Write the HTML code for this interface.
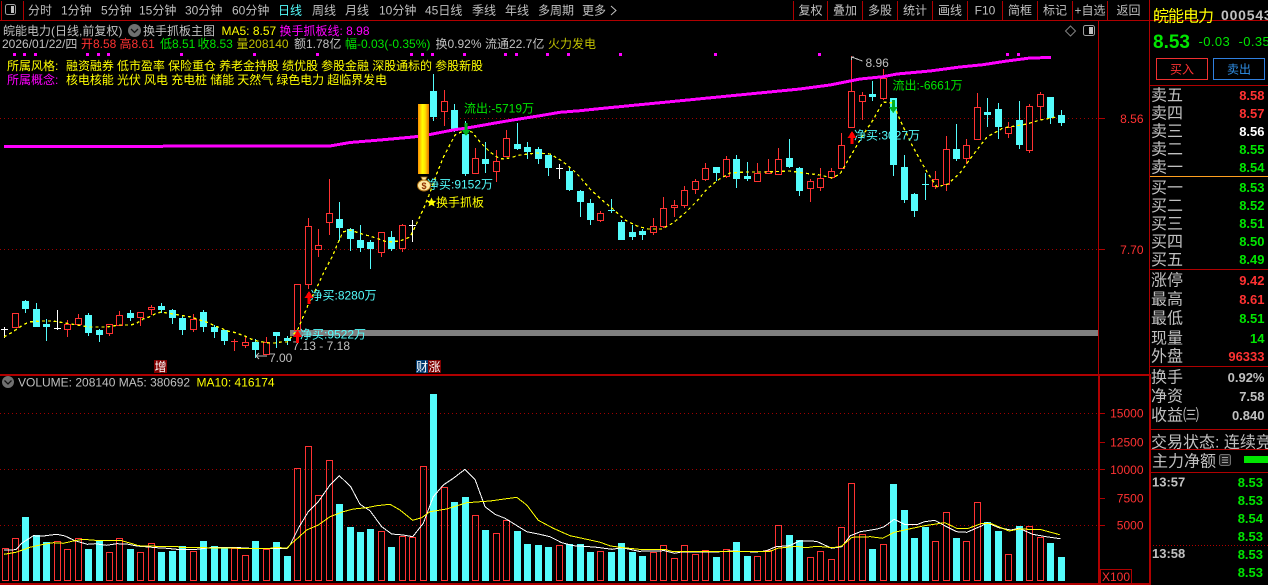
<!DOCTYPE html>
<html lang="zh">
<head>
<meta charset="utf-8">
<title>皖能电力</title>
<style>
html,body{margin:0;padding:0;background:#000;width:1268px;height:585px;overflow:hidden}
svg{display:block;position:absolute;left:0;top:0}
text{font-family:"Liberation Sans","WenQuanYi Zen Hei","Noto Sans CJK SC",sans-serif;font-size:12px;fill:#c0c0c0;white-space:pre}
.c{text-anchor:middle}
.e{text-anchor:end}
.r{fill:#ff3232}.g{fill:#00e600}.y{fill:#ffff00}.m{fill:#ff00ff}.cy{fill:#54fcfc}.o{fill:#c0c000}
.l{font-size:16px}
.b{font-size:13px;font-weight:bold}
</style>
</head>
<body>
<svg width="1268" height="585" viewBox="0 0 1268 585" xmlns="http://www.w3.org/2000/svg">
<rect width="1268" height="585" fill="#000"/>

<!-- frame lines -->
<g shape-rendering="crispEdges" fill="#b00000">
<rect x="0" y="20" width="1268" height="1"/>
<rect x="1" y="1" width="1" height="19"/><rect x="23" y="1" width="1" height="19"/>
<rect x="793" y="1" width="1" height="19"/><rect x="827" y="1" width="1" height="19"/><rect x="862" y="1" width="1" height="19"/><rect x="897" y="1" width="1" height="19"/><rect x="932" y="1" width="1" height="19"/><rect x="967" y="1" width="1" height="19"/><rect x="1002" y="1" width="1" height="19"/><rect x="1037" y="1" width="1" height="19"/><rect x="1072" y="1" width="1" height="19"/><rect x="1107" y="1" width="1" height="19"/>
<rect x="1149" y="0" width="1" height="585"/>
<rect x="1098" y="21" width="1" height="353"/>
<rect x="0" y="374" width="1150" height="2"/>
<rect x="0" y="583" width="1150" height="2"/>
<rect x="1098" y="374" width="2" height="211"/>
<rect x="1149" y="374" width="2" height="211"/>
<rect x="1099" y="118" width="6" height="1"/><rect x="1099" y="249" width="6" height="1"/>
<rect x="1100" y="413" width="5" height="1"/><rect x="1100" y="442" width="5" height="1"/><rect x="1100" y="469" width="5" height="1"/><rect x="1100" y="498" width="5" height="1"/><rect x="1100" y="525" width="5" height="1"/>
<rect x="1150" y="85" width="118" height="1"/>
<rect x="1150" y="269" width="118" height="1"/>
<rect x="1150" y="366" width="118" height="1"/>
<rect x="1150" y="429" width="118" height="1"/>
<rect x="1150" y="449" width="118" height="1"/>
<rect x="1150" y="472" width="118" height="1"/>
</g>
<rect x="1150" y="176" width="118" height="1" fill="#ffa020" shape-rendering="crispEdges"/>
<path d="M1150 545.5H1268" stroke="#b00000" stroke-dasharray="1 2" shape-rendering="crispEdges"/>
<rect x="1100.5" y="569.5" width="31" height="14" fill="none" stroke="#b00000" shape-rendering="crispEdges"/>

<!-- grid -->
<g stroke="#a00000" stroke-dasharray="1 3" shape-rendering="crispEdges" fill="none">
<path d="M0 118.5H1098M0 249.5H1098M0 413.5H1098M0 469.5H1098M0 525.5H1098"/>
</g>

<!-- toolbar -->
<rect x="5.5" y="4.5" width="10" height="10" rx="2" fill="none" stroke="#a0a0a0"/><rect x="11" y="6" width="3" height="7" fill="#c0c0c0"/>
<text x="28" y="14.5">分时</text>
<text x="61" y="14.5">1分钟</text>
<text x="101" y="14.5">5分钟</text>
<text x="139" y="14.5">15分钟</text>
<text x="185" y="14.5">30分钟</text>
<text x="232" y="14.5">60分钟</text>
<text x="278" y="14.5" class="cy">日线</text>
<text x="312" y="14.5">周线</text>
<text x="345" y="14.5">月线</text>
<text x="379" y="14.5">10分钟</text>
<text x="425" y="14.5">45日线</text>
<text x="472" y="14.5">季线</text>
<text x="505" y="14.5">年线</text>
<text x="538" y="14.5">多周期</text>
<text x="582" y="14.5">更多</text>
<path d="M611 6l5 4.500-5 4.500" fill="none" stroke="#c0c0c0"/>
<text x="810.500" y="14.5" class="c">复权</text>
<text x="845" y="14.5" class="c">叠加</text>
<text x="880" y="14.5" class="c">多股</text>
<text x="915" y="14.5" class="c">统计</text>
<text x="950" y="14.5" class="c">画线</text>
<text x="985" y="14.5" class="c">F10</text>
<text x="1020" y="14.5" class="c">简框</text>
<text x="1055" y="14.5" class="c">标记</text>
<text x="1090" y="14.5" class="c">+自选</text>
<text x="1128.500" y="14.5" class="c">返回</text>

<!-- row 2 -->
<text x="3" y="35">皖能电力(日线,前复权)</text>
<circle cx="134.500" cy="30.500" r="6.500" fill="#707070"/>
<path d="M131 29l3.500 3.500 3.500-3.500" fill="none" stroke="#111" stroke-width="1.300"/>
<text x="143" y="35">换手抓板主图</text>
<text x="221.500" y="35" class="y">MA5: 8.57</text>
<text x="279.500" y="35" class="m">换手抓板线: 8.98</text>

<!-- row 3 -->
<text x="2" y="48">2026/01/22/四</text>
<text x="81" y="48" class="r">开8.58</text>
<text x="119.500" y="48" class="r">高8.61</text>
<text x="160" y="48" class="g">低8.51</text>
<text x="197.500" y="48" class="g">收8.53</text>
<text x="236.500" y="48" class="o">量208140</text>
<text x="294" y="48">额1.78亿</text>
<text x="345" y="48" class="g">幅-0.03(-0.35%)</text>
<text x="435.500" y="48">换0.92%</text>
<text x="485" y="48">流通22.7亿</text>
<text x="548" y="48" class="o">火力发电</text>

<!-- magenta squares -->
<path fill="#ff00ff" shape-rendering="crispEdges" d="M13 53h3v3h-3zM23 53h3v3h-3zM34 53h3v3h-3zM86 53h3v3h-3zM97 53h3v3h-3zM107 53h3v3h-3zM180 53h3v3h-3zM253 53h3v3h-3zM316 53h3v3h-3zM410 53h3v3h-3zM421 53h3v3h-3zM431 53h3v3h-3zM463 53h3v3h-3zM504 53h3v3h-3zM515 53h3v3h-3zM546 53h3v3h-3zM567 53h3v3h-3zM619 53h3v3h-3zM714 53h3v3h-3zM818 53h3v3h-3zM1006 53h3v3h-3zM1017 53h3v3h-3z"/>

<!-- rows 4/5 -->
<text x="7" y="70" class="y">所属风格:</text>
<text x="66" y="70" class="y" textLength="417">融资融券 低市盈率 保险重仓 养老金持股 绩优股 参股金融 深股通标的 参股新股</text>
<text x="7" y="84" class="m">所属概念:</text>
<text x="66" y="84" class="y" textLength="321">核电核能 光伏 风电 充电桩 储能 天然气 绿色电力 超临界发电</text>

<!-- chart icons -->
<path d="M1070.500 26l5 5-5 5-5-5z" fill="none" stroke="#808080"/>
<rect x="1083.500" y="25.500" width="11" height="10" rx="2" fill="none" stroke="#a0a0a0"/><rect x="1089" y="27" width="4" height="7" fill="#c0c0c0"/>

<!-- gray band -->
<rect x="290" y="330" width="808" height="6" fill="#808080" shape-rendering="crispEdges"/>

<!-- candle wicks -->
<g shape-rendering="crispEdges" fill="none">
<path stroke="#ff3232" d="M67.500 320V337M78.500 314V326M109.500 324V336M119.500 311V325M140.500 312V326M151.500 305V315M193.500 314V332M245.500 337V348M266.500 337V354M308.500 218V289M318.500 229V257M329.500 179V235M381.500 232V257M402.500 224V252M444.500 90V126M475.500 148V174M496.500 150V182M506.500 130V157M600.500 211V222M653.500 218V235M663.500 197V228M674.500 200V217M684.500 186V208M695.500 179V194M705.500 163V181M726.500 156V178M757.500 163V181M768.500 159V174M778.500 148V175M810.500 179V202M820.500 168V191M831.500 168V179M841.500 133V169M851.500 56V128M862.500 92V120M883.500 69V100M935.500 171V189M946.500 136V191M966.500 139V164M977.500 93V140M1008.500 122V138M1029.500 104V153M1040.500 92V120M234.500 339V351M231 341.500H238"/>
<path stroke="#54fcfc" d="M25.500 300V313M36.500 303V327M46.500 319V341M88.500 313V336M99.500 329V342M130.500 310V321M161.500 303V313M172.500 309V324M182.500 316V335M203.500 310V332M214.500 325V338M224.500 330V345M255.500 339V358M276.500 332V348M287.500 336V345M339.500 202V241M350.500 228V251M360.500 225V252M370.500 240V269M391.500 231V251M433.500 74V121M454.500 104V132M465.500 121V176M485.500 142V173M517.500 123V150M527.500 142V159M538.500 147V164M548.500 155V176M569.500 168V191M580.500 190V217M590.500 199V225M621.500 220V240M632.500 225V240M642.500 229V240M716.500 167V181M736.500 155V188M747.500 162V181M789.500 139V168M799.500 167V196M872.500 81V101M893.500 98V176M904.500 155V203M914.500 193V217M956.500 124V161M987.500 98V127M998.500 103V139M1019.500 101V149M1050.500 97V124M1061.500 110V126M611.500 199V213M608 210.500H615M925.500 173V200M922 184.500H929"/>
<path stroke="#ffffff" d="M4.500 327V338M1 329.500H8M57.500 310V330M54 328.500H61M412.500 220V242M409 225.500H416M559.500 164V179M556 168.500H563"/>
</g>
<!-- candle bodies cyan -->
<path fill="#54fcfc" shape-rendering="crispEdges" d="M22 301h7v8h-7zM33 309h7v18h-7zM43 324h7v3h-7zM85 315h7v18h-7zM96 330h7v5h-7zM127 313h7v5h-7zM158 306h7v4h-7zM169 310h7v8h-7zM179 318h7v12h-7zM200 312h7v15h-7zM211 327h7v5h-7zM221 330h7v11h-7zM252 342h7v8h-7zM273 332h7v4h-7zM284 338h7v3h-7zM336 219h7v9h-7zM347 229h7v10h-7zM357 240h7v8h-7zM367 242h7v7h-7zM388 237h7v12h-7zM430 91h7v26h-7zM451 110h7v20h-7zM462 134h7v40h-7zM482 159h7v5h-7zM514 144h7v5h-7zM524 147h7v5h-7zM535 149h7v10h-7zM545 155h7v13h-7zM566 171h7v19h-7zM577 191h7v11h-7zM587 203h7v17h-7zM618 222h7v18h-7zM629 232h7v5h-7zM639 231h7v4h-7zM713 167h7v6h-7zM733 159h7v20h-7zM744 176h7v3h-7zM786 158h7v9h-7zM796 168h7v23h-7zM869 94h7v3h-7zM890 98h7v67h-7zM901 167h7v33h-7zM911 194h7v17h-7zM953 149h7v10h-7zM984 112h7v3h-7zM995 109h7v18h-7zM1016 120h7v25h-7zM1047 97h7v21h-7zM1058 115h7v8h-7z"/>
<!-- candle bodies red -->
<path fill="#000" stroke="#ff3232" shape-rendering="crispEdges" d="M12.500 313.500h6v14h-6zM64.500 324.500h6v5h-6zM75.500 318.500h6v6h-6zM106.500 324.500h6v9h-6zM116.500 315.500h6v10h-6zM137.500 312.500h6v5h-6zM148.500 307.500h6v2h-6zM190.500 319.500h6v10h-6zM242.500 342.500h6v3h-6zM263.500 342.500h6v12h-6zM294.500 284.500h6v46h-6zM305.500 226.500h6v58h-6zM315.500 245.500h6v4h-6zM326.500 213.500h6v9h-6zM378.500 232.500h6v20h-6zM399.500 225.500h6v23h-6zM441.500 101.500h6v10h-6zM472.500 158.500h6v15h-6zM493.500 161.500h6v10h-6zM503.500 138.500h6v18h-6zM597.500 213.500h6v7h-6zM650.500 226.500h6v6h-6zM660.500 208.500h6v18h-6zM671.500 205.500h6v2h-6zM681.500 190.500h6v15h-6zM692.500 181.500h6v8h-6zM702.500 168.500h6v11h-6zM723.500 159.500h6v17h-6zM754.500 173.500h6v8h-6zM765.500 171.500h6v2h-6zM775.500 159.500h6v15h-6zM807.500 181.500h6v7h-6zM817.500 178.500h6v9h-6zM828.500 171.500h6v6h-6zM838.500 145.500h6v23h-6zM848.500 91.500h6v36h-6zM859.500 95.500h6v6h-6zM880.500 78.500h6v20h-6zM932.500 179.500h6v7h-6zM943.500 149.500h6v35h-6zM963.500 145.500h6v13h-6zM974.500 107.500h6v32h-6zM1005.500 127.500h6v6h-6zM1026.500 106.500h6v44h-6zM1037.500 94.500h6v12h-6z"/>

<!-- MA5 dashed yellow -->
<polyline fill="none" stroke="#ffff00" stroke-width="1.300" stroke-dasharray="3 3" shape-rendering="crispEdges" points="4,337 11,333 17,329 23,325 29,322 41,321 53,321 59,322 65,323 71,324 77,325 83,326 89,327 95,327 101,327 107,327 113,326 119,325 125,325 131,325 137,323 143,319 149,317 155,314 161,312 167,313 173,314 179,315 185,316 191,317 197,319 203,321 209,323 215,326 221,328 227,331 233,332 239,334 245,336 251,339 257,341 263,342 269,343 275,343 281,342 287,342 293,335 298,329 308,305 317,287 325,270 333,255 337,245 343,232 350,230 362,234 373,237 387,242 400,241 410,237 415,227 423,210 428,198 437,173 443,158 455,135 465,130 472,132 480,142 490,152 500,159 510,158 520,155 537,153 550,154 562,161 573,170 580,177 590,189 602,200 613,209 625,220 637,226 648,229 662,229 673,223 685,213 697,201 707,189 718,180 730,173 747,172 767,172 790,171 803,173 820,175 832,178 840,174 850,157 863,135 873,120 883,102 893,103 900,120 913,147 927,172 937,187 948,184 960,173 973,155 987,137 1003,128 1027,124 1040,120 1057,117"/>

<!-- magenta line -->
<polyline fill="none" stroke="#ff00ff" stroke-width="3" shape-rendering="crispEdges" points="4,146.500 330,146 350,142.500 380,140 413,137 430,134.500 453,130 470,127.500 497,122.700 513,120 540,115.700 560,112.300 580,110.700 600,108.600 695,99.300 800,89 830,85 860,79 883,76.700 897,74 930,71 960,67 983,64.700 1007,61 1030,58 1051,57.500"/>

<!-- gold bar -->
<defs><linearGradient id="gold" x1="0" x2="1" y1="0" y2="0"><stop offset="0" stop-color="#ff8c00"/><stop offset=".4" stop-color="#ffff00"/><stop offset=".65" stop-color="#ffe000"/><stop offset="1" stop-color="#e87000"/></linearGradient></defs>
<rect x="418" y="104" width="11" height="70" fill="url(#gold)"/>

<!-- volume bars cyan -->
<path fill="#54fcfc" shape-rendering="crispEdges" d="M22 517h7v64h-7zM33 535h7v46h-7zM43 542h7v39h-7zM85 549h7v32h-7zM96 541h7v40h-7zM127 549h7v32h-7zM158 552h7v29h-7zM169 551h7v30h-7zM179 546h7v35h-7zM200 541h7v40h-7zM211 546h7v35h-7zM221 548h7v33h-7zM252 541h7v40h-7zM273 542h7v39h-7zM284 556h7v25h-7zM336 504h7v77h-7zM347 527h7v54h-7zM357 532h7v49h-7zM367 529h7v52h-7zM388 547h7v34h-7zM430 394h7v187h-7zM451 502h7v79h-7zM462 497h7v84h-7zM482 530h7v51h-7zM514 531h7v50h-7zM524 544h7v37h-7zM535 545h7v36h-7zM545 547h7v34h-7zM566 544h7v37h-7zM577 544h7v37h-7zM587 552h7v29h-7zM608 552h7v29h-7zM618 543h7v38h-7zM629 552h7v29h-7zM639 556h7v25h-7zM713 557h7v24h-7zM733 542h7v39h-7zM744 556h7v25h-7zM786 535h7v46h-7zM796 540h7v41h-7zM869 549h7v32h-7zM890 484h7v97h-7zM901 510h7v71h-7zM911 538h7v43h-7zM922 527h7v54h-7zM953 538h7v43h-7zM984 522h7v59h-7zM995 531h7v50h-7zM1016 526h7v55h-7zM1047 543h7v38h-7zM1058 557h7v24h-7z"/>
<!-- volume bars red -->
<path fill="none" stroke="#ff3232" shape-rendering="crispEdges" d="M2.500 548.500h6V580.500h-6zM12.500 538.500h6V580.500h-6zM54.500 541.500h6V580.500h-6zM64.500 549.500h6V580.500h-6zM75.500 538.500h6V580.500h-6zM106.500 552.500h6V580.500h-6zM116.500 538.500h6V580.500h-6zM137.500 552.500h6V580.500h-6zM148.500 543.500h6V580.500h-6zM190.500 551.500h6V580.500h-6zM231.500 548.500h6V580.500h-6zM242.500 555.500h6V580.500h-6zM263.500 549.500h6V580.500h-6zM294.500 468.500h6V580.500h-6zM305.500 446.500h6V580.500h-6zM315.500 495.500h6V580.500h-6zM326.500 460.500h6V580.500h-6zM378.500 531.500h6V580.500h-6zM399.500 536.500h6V580.500h-6zM409.500 537.500h6V580.500h-6zM420.500 466.500h6V580.500h-6zM441.500 487.500h6V580.500h-6zM472.500 515.500h6V580.500h-6zM493.500 533.500h6V580.500h-6zM503.500 520.500h6V580.500h-6zM556.500 545.500h6V580.500h-6zM597.500 551.500h6V580.500h-6zM650.500 552.500h6V580.500h-6zM660.500 545.500h6V580.500h-6zM671.500 558.500h6V580.500h-6zM681.500 545.500h6V580.500h-6zM692.500 554.500h6V580.500h-6zM702.500 550.500h6V580.500h-6zM723.500 549.500h6V580.500h-6zM754.500 556.500h6V580.500h-6zM765.500 550.500h6V580.500h-6zM775.500 525.500h6V580.500h-6zM807.500 557.500h6V580.500h-6zM817.500 551.500h6V580.500h-6zM828.500 559.500h6V580.500h-6zM838.500 527.500h6V580.500h-6zM848.500 483.500h6V580.500h-6zM859.500 534.500h6V580.500h-6zM880.500 544.500h6V580.500h-6zM932.500 541.500h6V580.500h-6zM943.500 512.500h6V580.500h-6zM963.500 541.500h6V580.500h-6zM974.500 502.500h6V580.500h-6zM1005.500 554.500h6V580.500h-6zM1026.500 526.500h6V580.500h-6zM1037.500 537.500h6V580.500h-6z"/>

<!-- volume MA lines -->
<polyline fill="none" stroke="#ffffff" stroke-width="1" shape-rendering="crispEdges" points="4,550 16,549.700 21.700,543.300 33.300,535.700 43.300,536 56.700,534.300 65,536 75,540.700 87.300,544.300 95,543.700 106.700,545.300 116.700,543.700 126.700,544 136.700,546 156.700,547.700 166.700,548.300 176.700,549.300 196.700,549.300 210,547.700 240,547.700 250,548.300 286.700,548.300 290,545 298.300,528.300 308.300,511.700 318.300,501.700 330,485 339.300,475.700 350.700,486.700 360,504.300 370,510.700 381.700,526.700 391.700,534 403.300,535 412.700,536.700 423.300,523.300 433.300,496.700 443.300,485 453.300,478.300 465,469.300 475,479.300 485,506.700 495,514.300 505,518.300 526.700,531.700 538.300,534 550,536.700 561.700,542.700 573.300,545.700 580,546 596.900,547.300 612.100,549.300 622.200,547.700 639,551.300 664.500,550.700 674.600,553.300 681.400,552 715.100,552 732,551 755.700,552 765.800,551 776,546.700 789.500,545.700 799.600,541 816.500,541.300 831.700,548.300 841.800,546.700 850.300,535.700 860.400,531.700 877.300,529 884.100,526.700 894.200,519.300 904.300,524.300 917.800,524.300 924.600,521.700 934.700,520.300 946.600,526.700 956.700,531.700 966.800,532.300 982,525.700 987.100,522.700 998.900,527.700 1010.700,530 1019.200,528.300 1032.700,534.300 1046.200,536.700 1060.400,538.700"/>
<polyline fill="none" stroke="#ffff00" stroke-width="1" shape-rendering="crispEdges" points="4,554.300 16,552.300 30,547.300 40,545 53.300,542.700 63.300,543.300 73.300,541 83.300,539.300 95,540.300 121.700,540.700 133.300,544 138.300,545.700 156.700,546.300 176.700,546.300 180,547.300 240,548.300 270,548.300 276.700,547.300 287.300,548.300 290,545 306.700,530 318.300,525 330,516.700 343.300,511.700 353.300,509 366.700,507.700 376.700,505.700 390,504.300 400,510 412.700,520.300 421.700,517.700 430,511.700 446.700,509 466.700,502.700 490,501 516.700,497.300 526.700,505 538.300,520.300 553.300,528.300 570,535.700 590,540 600.300,542.300 610.400,546 623.900,547.700 639.100,549.300 664.500,549.300 672.900,551.700 769.200,551.700 777.600,548.300 796.200,546.300 806.400,547.700 816.500,546.300 833.400,547.700 841.800,546 852,537.300 870.500,536.700 882.400,538.300 894.200,532.300 907.700,529.300 924.600,525.700 944.900,522.700 956.700,528.300 968.500,528.300 982,523.300 990.500,523.300 1009,531 1019.200,529 1041.200,529.700 1059.700,534.700"/>

<!-- volume legend -->
<circle cx="8" cy="382" r="6" fill="#707070"/>
<path d="M4.500 380.500l3.500 3.500 3.500-3.500" fill="none" stroke="#111" stroke-width="1.300"/>
<text x="18" y="386.500" fill="#c0c0c0">VOLUME: 208140 MA5: 380692</text>
<text x="196.500" y="386.500" class="y">MA10: 416174</text>

<!-- badges -->
<rect x="154" y="360" width="13" height="13" fill="#800000"/>
<text x="160.500" y="371" class="c" style="fill:#fff">增</text>
<rect x="416" y="360" width="12" height="13" fill="#003a6f"/>
<text x="422" y="371" class="c" style="fill:#fff">财</text>
<rect x="428" y="360" width="13" height="13" fill="#800000"/>
<text x="434.500" y="371" class="c" style="fill:#fff">涨</text>

<!-- annotations -->
<path d="M267 356H256M259 353l-3 3 3 3" fill="none" stroke="#c0c0c0"/>
<text x="269" y="362">7.00</text>
<text x="292.500" y="350" textLength="57.500">7.13 - 7.18</text>
<text x="300" y="338.500" class="cy">净买:9522万</text>
<text x="310.500" y="299.500" class="cy">净买:8280万</text>
<text x="427" y="188.500" class="cy">净买:9152万</text>
<text x="854" y="139.500" class="cy">净买:3027万</text>
<text x="464" y="112.500" class="g">流出:-5719万</text>
<text x="892.500" y="89.500" class="g">流出:-6661万</text>
<text x="436" y="206.500" class="y">换手抓板</text>
<path d="M431.500 197.500l1.400 3.200 3.400.3-2.600 2.200.8 3.300-3-1.800-3 1.800.8-3.300-2.600-2.200 3.400-.3z" fill="#ffff00"/>

<!-- arrows -->
<path d="M297.500 330l-4.500 7h3v6h3v-6h3z" fill="#ff0000" shape-rendering="crispEdges"/>
<path d="M309 291l-4.500 7h3v6h3v-6h3z" fill="#ff0000" shape-rendering="crispEdges"/>
<path d="M852 131l-4.500 7h3v6h3v-6h3z" fill="#ff0000" shape-rendering="crispEdges"/>
<path d="M464.500 123h3v7h3l-4.500 6-4.500-6h3z" fill="#00b020" shape-rendering="crispEdges"/>
<path d="M891.800 100h3v7h3l-4.500 6-4.500-6h3z" fill="#00b020" shape-rendering="crispEdges"/>

<!-- money bag -->
<ellipse cx="424" cy="185.500" rx="6.500" ry="5.500" fill="#ffe9a0" stroke="#a86a10"/>
<path d="M421 177h6l-1.500 3h-3z" fill="#ffe9a0" stroke="#a86a10" stroke-width=".8"/>
<text x="424" y="189" class="c" style="font-size:9px;font-weight:bold;fill:#903000">$</text>

<!-- 8.96 marker -->
<path d="M851.500 57V60M851.500 57H854M851.500 57l11 4" fill="none" stroke="#c0c0c0" shape-rendering="crispEdges"/>
<text x="865.500" y="67">8.96</text>

<!-- axis labels -->
<text x="1143.500" y="123" class="e r">8.56</text>
<text x="1143.500" y="254" class="e r">7.70</text>
<text x="1143.500" y="417.500" class="e r">15000</text>
<text x="1143.500" y="446.500" class="e r">12500</text>
<text x="1143.500" y="474" class="e r">10000</text>
<text x="1143.500" y="502.500" class="e r">7500</text>
<text x="1143.500" y="529.500" class="e r">5000</text>
<text x="1102" y="581" class="r">X100</text>

<!-- right panel header -->
<text x="1153" y="21.500" class="y" style="font-size:16px" textLength="61">皖能电力</text>
<text x="1221" y="20" style="font-size:14px;font-weight:bold;letter-spacing:.8px">000543</text>
<text x="1153" y="48" class="g" style="font-size:19px;font-weight:bold">8.53</text>
<text x="1198.500" y="46" class="g" style="font-size:13px;letter-spacing:.4px">-0.03</text>
<text x="1238.500" y="46" class="g" style="font-size:13px;letter-spacing:.4px">-0.35</text>
<rect x="1156.500" y="58.500" width="51" height="21" fill="none" stroke="#f03030" shape-rendering="crispEdges"/>
<text x="1182" y="73.500" class="c r">买入</text>
<rect x="1213.500" y="58.500" width="51" height="21" fill="none" stroke="#3080e0" shape-rendering="crispEdges"/>
<text x="1239" y="73.500" class="c" style="fill:#3090e8">卖出</text>

<!-- order book -->
<text x="1151" y="100.500" class="l">卖五</text><text x="1264.500" y="100" class="b e r">8.58</text>
<text x="1151" y="118.500" class="l">卖四</text><text x="1264.500" y="118" class="b e r">8.57</text>
<text x="1151" y="136.500" class="l">卖三</text><text x="1264.500" y="136" class="b e" style="fill:#fff">8.56</text>
<text x="1151" y="154.500" class="l">卖二</text><text x="1264.500" y="154" class="b e g">8.55</text>
<text x="1151" y="172.500" class="l">卖一</text><text x="1264.500" y="172" class="b e g">8.54</text>
<text x="1151" y="193" class="l">买一</text><text x="1264.500" y="192" class="b e g">8.53</text>
<text x="1151" y="211" class="l">买二</text><text x="1264.500" y="210" class="b e g">8.52</text>
<text x="1151" y="229" class="l">买三</text><text x="1264.500" y="228" class="b e g">8.51</text>
<text x="1151" y="247" class="l">买四</text><text x="1264.500" y="246" class="b e g">8.50</text>
<text x="1151" y="265" class="l">买五</text><text x="1264.500" y="264" class="b e g">8.49</text>
<text x="1151" y="285.500" class="l">涨停</text><text x="1264.500" y="285" class="b e r">9.42</text>
<text x="1151" y="304.500" class="l">最高</text><text x="1264.500" y="304" class="b e r">8.61</text>
<text x="1151" y="323.500" class="l">最低</text><text x="1264.500" y="323" class="b e g">8.51</text>
<text x="1151" y="343.500" class="l">现量</text><text x="1264.500" y="343" class="b e g">14</text>
<text x="1151" y="361.500" class="l">外盘</text><text x="1264.500" y="361" class="b e r">96333</text>
<text x="1151" y="382.500" class="l">换手</text><text x="1264.500" y="382" class="b e">0.92%</text>
<text x="1151" y="401.500" class="l">净资</text><text x="1264.500" y="401" class="b e">7.58</text>
<text x="1151" y="420.500" class="l">收益㈢</text><text x="1264.500" y="420" class="b e">0.840</text>
<text x="1151" y="447.500" class="l">交易状态: 连续竞价</text>
<text x="1152" y="466.500" class="l">主力净额</text>
<rect x="1219.500" y="454.500" width="11" height="11" rx="2" fill="#202020" stroke="#707070"/>
<path d="M1222 457.500h6M1222 460h6M1222 462.500h6" stroke="#a0a0a0" shape-rendering="crispEdges"/>
<rect x="1244" y="456" width="24" height="7" fill="#00e600"/>

<text x="1152" y="486.500" class="b">13:57</text><text x="1263" y="487" class="b e g">8.53</text>
<text x="1263" y="505" class="b e g">8.53</text>
<text x="1263" y="523" class="b e g">8.54</text>
<text x="1263" y="541" class="b e g">8.53</text>
<text x="1152" y="558" class="b">13:58</text><text x="1263" y="559" class="b e g">8.53</text>
<text x="1263" y="577" class="b e g">8.53</text>
</svg>
</body>
</html>
